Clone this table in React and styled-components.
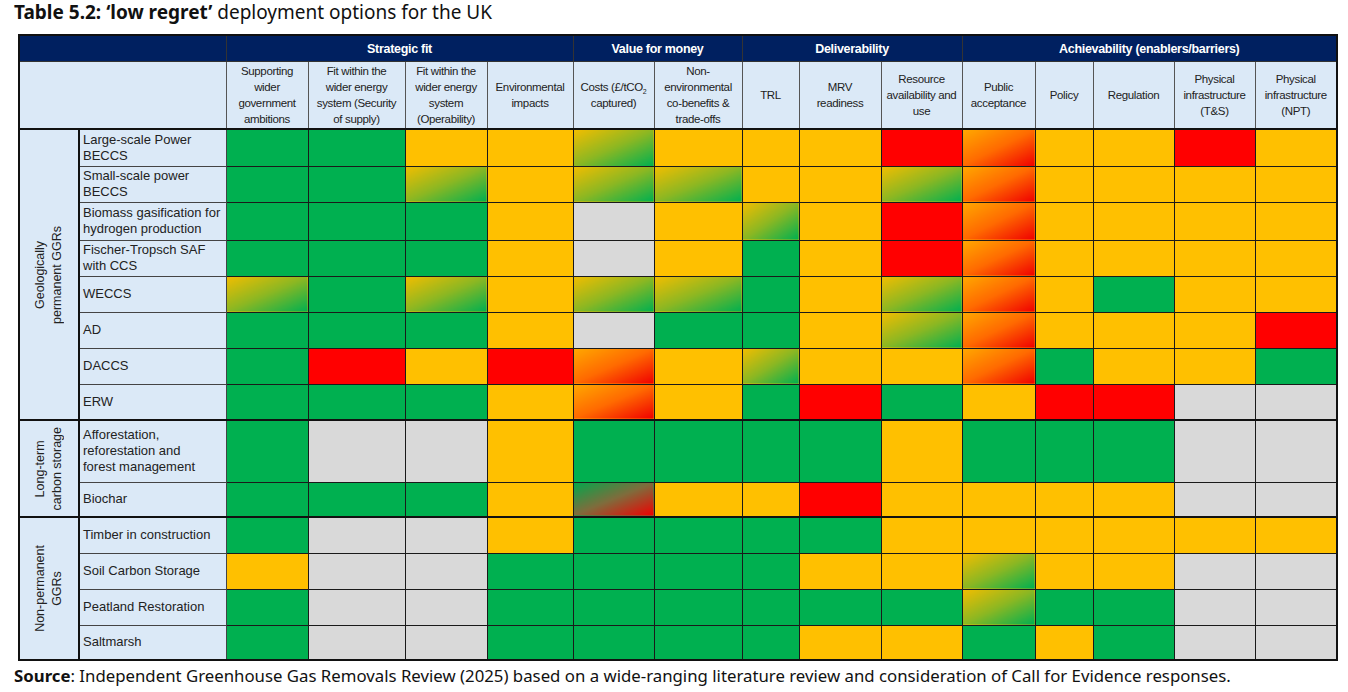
import React from "react";
import styled, { createGlobalStyle, css } from "styled-components";

const GlobalStyle = createGlobalStyle`
  body {
    margin: 0;
    background: #fff;
    color: #000;
  }
`;

const Page = styled.div`
  padding: 0 14px;
  font-family: "Noto Sans", "Liberation Sans", sans-serif;
`;

const Title = styled.h1`
  margin: 0 0 10px 0;
  font-size: 19px;
  line-height: 24px;
  font-weight: 400;
  color: #111;
  b {
    font-weight: 700;
  }
`;

const Source = styled.p`
  margin: 4px 0 0 0;
  font-size: 16.8px;
  line-height: 22px;
  color: #111;
  b {
    font-weight: 700;
  }
`;

const Table = styled.table`
  border-collapse: collapse;
  table-layout: fixed;
  width: 1318px;
  margin-left: 4px;
  border: 2px solid #111;
  font-family: "Liberation Sans Narrow", "Arial Narrow", "Liberation Sans", Arial, sans-serif;
`;

const GroupHead = styled.th`
  background: #002060;
  color: #fff;
  font-size: 12.5px;
  font-weight: 700;
  height: 25px;
  padding: 0;
  text-align: center;
  border: 1px solid #333;
  letter-spacing: -0.3px;
`;

const SubHead = styled.th`
  background: #dbe9f7;
  color: #222;
  font-size: 11.5px;
  font-weight: 400;
  line-height: 16px;
  height: 66px;
  padding: 0 1px;
  text-align: center;
  vertical-align: middle;
  white-space: pre-line;
  border: 1px solid #555;
  border-bottom: 2px solid #111;
  letter-spacing: -0.35px;
  sub {
    font-size: 7px;
    line-height: 0;
  }
`;

const Row = styled.tr`
  height: ${(p) => p.$h}px;
  ${(p) =>
    p.$first &&
    css`
      & > td {
        border-top: 2px solid #111;
      }
    `}
`;

const GroupCell = styled.td`
  background: #dbe9f7;
  border: 1px solid #333;
  border-right: 2px solid #111;
  padding: 0;
  text-align: center;
  vertical-align: middle;
`;

const GroupLabel = styled.div`
  writing-mode: vertical-rl;
  transform: rotate(180deg);
  margin: 0 auto;
  font-family: "Liberation Sans", Arial, sans-serif;
  font-size: 12.5px;
  line-height: 17px;
  color: #222;
  white-space: pre-line;
  text-align: center;
`;

const NameCell = styled.td`
  background: #dbe9f7;
  border: 1px solid #444;
  padding: 0 1px 0 3px;
  font-family: "Liberation Sans", Arial, sans-serif;
  font-size: 13px;
  line-height: 16px;
  color: #222;
  white-space: pre-line;
  vertical-align: middle;
`;

const fills = {
  G: "#00b050",
  A: "#ffc000",
  R: "#ff0000",
  X: "#d9d9d9",
  AG: "linear-gradient(to bottom right, #f2bd00 0%, #8cb722 50%, #00b050 100%)",
  AR: "linear-gradient(to bottom right, #ffa800 0%, #ff6a00 50%, #f00000 100%)",
  GR: "linear-gradient(to bottom right, #00a84c 0%, #7f6c3c 50%, #f00000 100%)",
};

const Rating = styled.td`
  background: ${(p) => fills[p.$r]};
  border: 1px solid #1a1a1a;
  padding: 0;
`;

const columns = [
  "Supporting\nwider\ngovernment\nambitions",
  "Fit within the\nwider energy\nsystem (Security\nof supply)",
  "Fit within the\nwider energy\nsystem\n(Operability)",
  "Environmental\nimpacts",
  "costs",
  "Non-\nenvironmental\nco-benefits &\ntrade-offs",
  "TRL",
  "MRV\nreadiness",
  "Resource\navailability and\nuse",
  "Public\nacceptance",
  "Policy",
  "Regulation",
  "Physical\ninfrastructure\n(T&S)",
  "Physical\ninfrastructure\n(NPT)",
];

const widths = [60, 147, 82, 97, 82, 86, 81, 88, 57, 82, 81, 73, 58, 81, 81, 82];

const groups = [
  {
    label: "Geologically\npermanent GGRs",
    rows: [
      ["Large-scale Power\nBECCS", "G G A A AG A A A R AR A A R A", 37],
      ["Small-scale power\nBECCS", "G G AG A AG AG A A AG AR A A A A", 36],
      ["Biomass gasification for\nhydrogen production", "G G G A X A AG A R AR A A A A", 38],
      ["Fischer-Tropsch SAF\nwith CCS", "G G G A X A G A R AR A A A A", 36],
      ["WECCS", "AG G AG A AG AG G A AG AR A G A A", 36],
      ["AD", "G G G A X G G A AG AR A A A R", 36],
      ["DACCS", "G R A R AR A AG A A AR G A A G", 36],
      ["ERW", "G G G A AR A G R G A R R X X", 36],
    ],
  },
  {
    label: "Long-term\ncarbon storage",
    rows: [
      ["Afforestation,\nreforestation and\nforest management", "G X X A G G G G A G G G X X", 62],
      ["Biochar", "G G G A GR A A R A A A A X X", 35],
    ],
  },
  {
    label: "Non-permanent\nGGRs",
    rows: [
      ["Timber in construction", "G X X A G G G G A A A A A A", 36],
      ["Soil Carbon Storage", "A X X G G G G A A AG A A X X", 36],
      ["Peatland Restoration", "G X X G G G G G G AG G G X X", 36],
      ["Saltmarsh", "G X X G G G G A A G A G X X", 35],
    ],
  },
];

const App = () => (
  <Page>
    <GlobalStyle />
    <Title>
      <b>Table 5.2: ‘low regret’</b> deployment options for the UK
    </Title>
    <Table>
      <colgroup>
        {widths.map((w, i) => (
          <col key={i} style={{ width: w }} />
        ))}
      </colgroup>
      <thead>
        <tr>
          <GroupHead colSpan={2} />
          <GroupHead colSpan={4}>Strategic fit</GroupHead>
          <GroupHead colSpan={2}>Value for money</GroupHead>
          <GroupHead colSpan={3}>Deliverability</GroupHead>
          <GroupHead colSpan={5}>Achievability (enablers/barriers)</GroupHead>
        </tr>
        <tr>
          <SubHead colSpan={2} />
          {columns.map((c) =>
            c === "costs" ? (
              <SubHead key={c}>
                Costs (£/tCO<sub>2</sub>
                {"\n"}captured)
              </SubHead>
            ) : (
              <SubHead key={c}>{c}</SubHead>
            )
          )}
        </tr>
      </thead>
      <tbody>
        {groups.map((g, gi) =>
          g.rows.map(([name, codes, h], ri) => (
            <Row key={name} $h={h} $first={ri === 0 && gi > 0}>
              {ri === 0 && (
                <GroupCell rowSpan={g.rows.length}>
                  <GroupLabel>{g.label}</GroupLabel>
                </GroupCell>
              )}
              <NameCell>{name}</NameCell>
              {codes.split(" ").map((r, ci) => (
                <Rating key={ci} $r={r} />
              ))}
            </Row>
          ))
        )}
      </tbody>
    </Table>
    <Source>
      <b>Source</b>: Independent Greenhouse Gas Removals Review (2025) based on a wide-ranging literature review
      and consideration of Call for Evidence responses.
    </Source>
  </Page>
);

export default App;
